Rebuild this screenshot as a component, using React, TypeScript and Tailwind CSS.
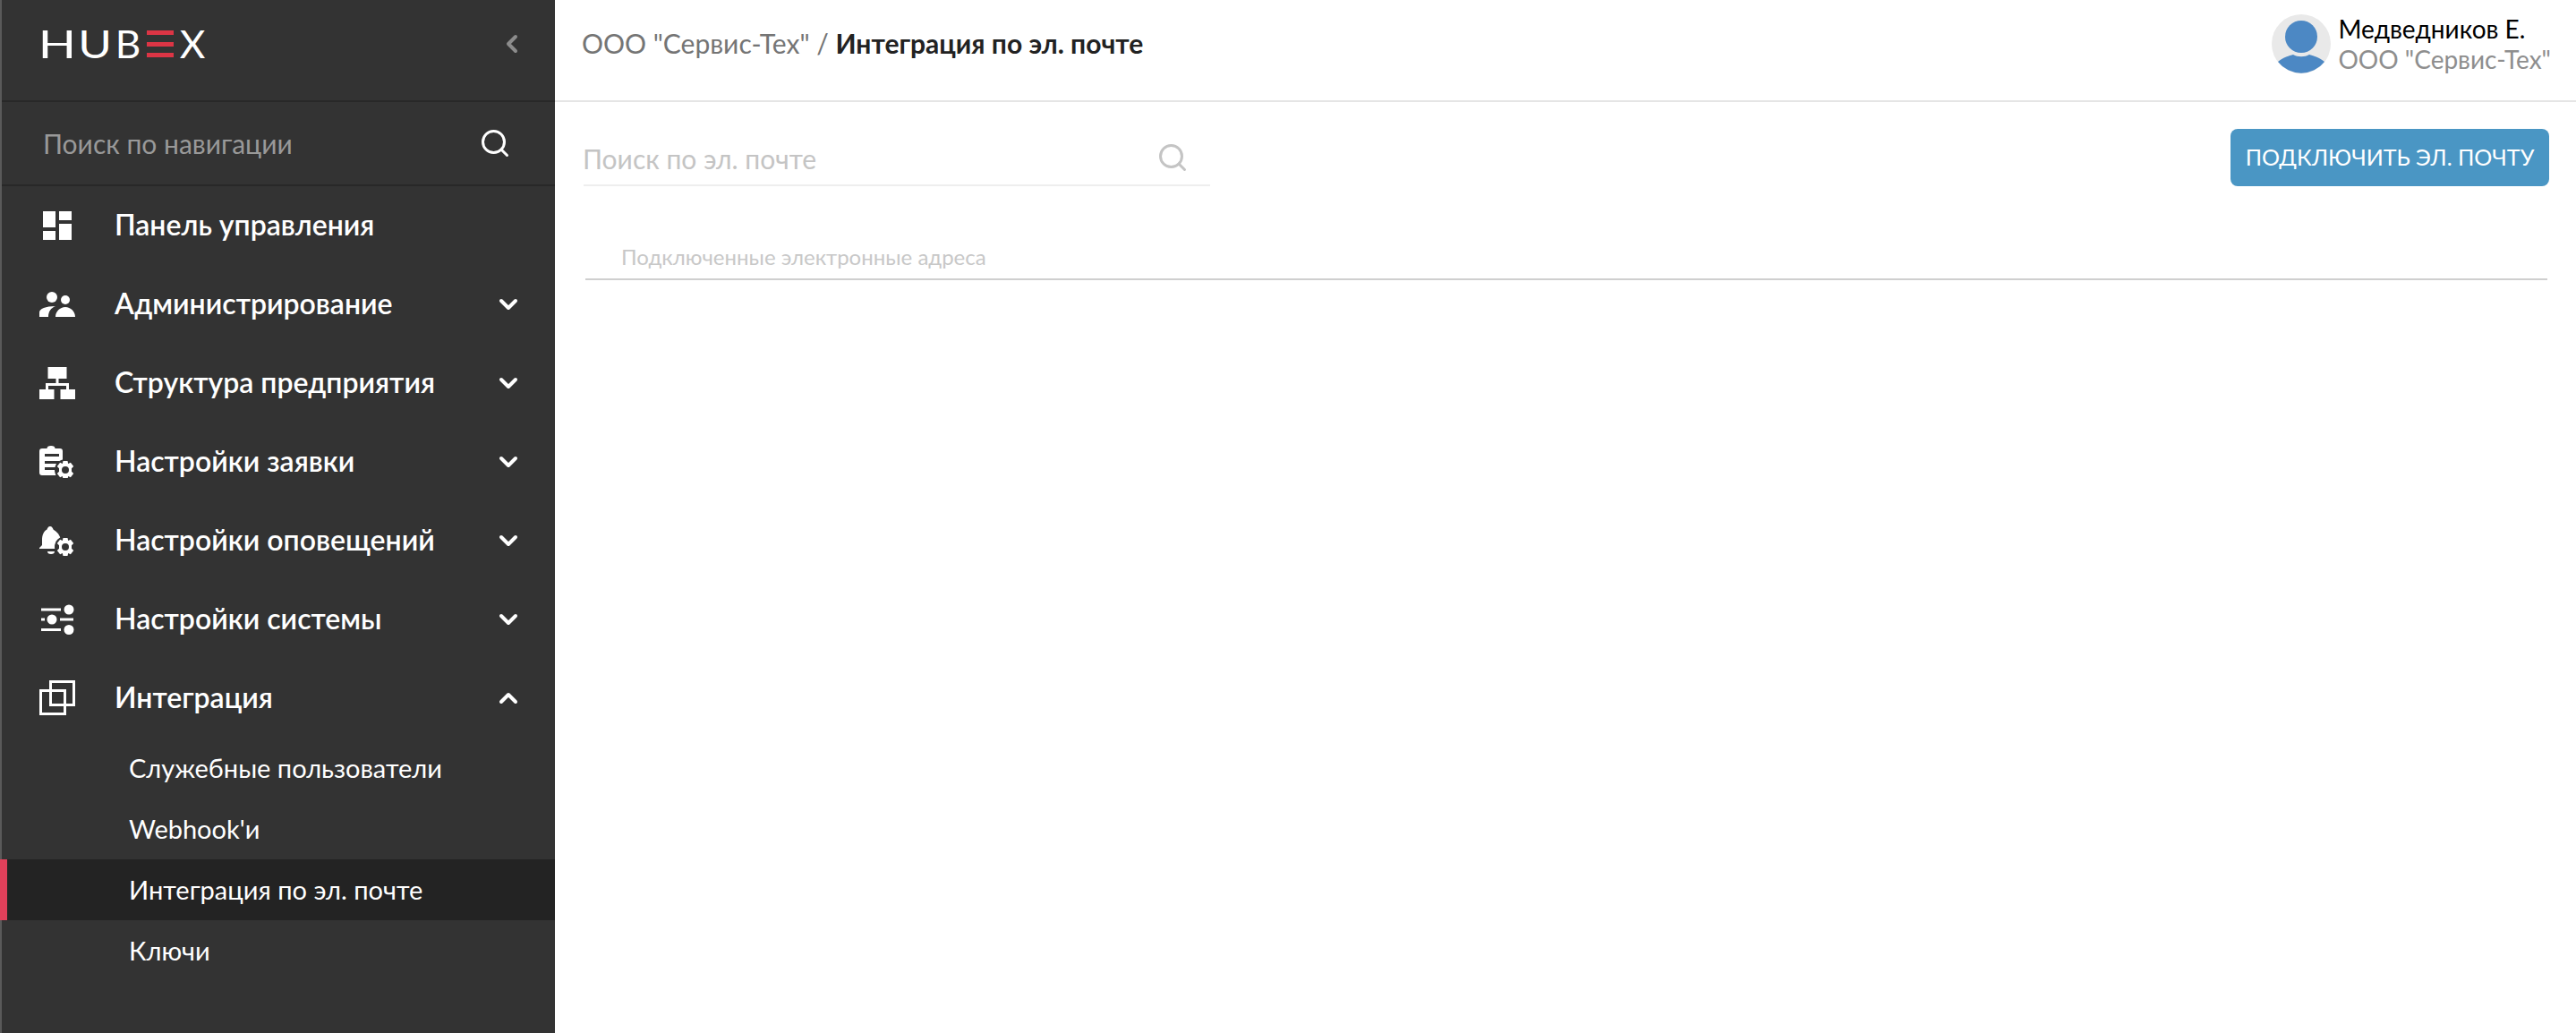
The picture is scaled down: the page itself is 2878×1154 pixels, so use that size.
import { ChevronDown, ChevronLeft, ChevronUp, Search } from "lucide-react";
import type { ReactNode } from "react";

const font = "font-['Lato','Open_Sans','Noto_Sans',sans-serif]";

const DashboardIcon = () => (
  <svg viewBox="0 0 32 32" className="h-8 w-8 fill-white">
    <path d="M0 0h14v18H0zM18 0h14v10H18zM0 22h14v10H0zM18 14h14v18H18z" />
  </svg>
);

const UsersIcon = () => (
  <svg viewBox="0 0 40 28" className="h-7 w-10 fill-white">
    <circle cx="14" cy="6" r="6" />
    <circle cx="29" cy="9" r="5" />
    <path d="M0 28v-5c0-4 7-7 18-7-5 2-8 6-8 12zM18 28c0-6 5-11 11-11s11 5 11 11z" />
  </svg>
);

const StructureIcon = () => (
  <svg viewBox="0 0 40 36" className="h-9 w-10 fill-white">
    <path d="M9.500 0h21v13h-9v5H33v7h7v11H23.500V25H30v-4H10v4h6.500v11H0V25h7v-7h11.500v-5h-9z" />
  </svg>
);

const Gear = ({ cx, cy }: { cx: number; cy: number }) => (
  <g transform={`translate(${cx} ${cy})`}>
    <circle r="12" fill="#333333" />
    <path
      fillRule="evenodd"
      d="M-2.500-10h5l.7 3 2.700-1.300 3.300 4.300-2.200 2.200v3.600l2.200 2.200-3.300 4.300-2.700-1.300-.7 3h-5l-.7-3-2.700 1.300-3.300-4.300 2.200-2.200v-3.600l-2.200-2.200 3.300-4.300 2.700 1.300zM0-4a4 4 0 1 0 0 8 4 4 0 0 0 0-8z"
    />
  </g>
);

const TicketSettingsIcon = () => (
  <svg viewBox="0 0 40 36" className="h-9 w-10 fill-white">
    <path
      fillRule="evenodd"
      d="M3 3h5.500a4.500 3 0 0 1 9 0H23a3 3 0 0 1 3 3v24a3 3 0 0 1-3 3H3a3 3 0 0 1-3-3V6a3 3 0 0 1 3-3zM6 9v3h16V9zM6 17v3h16v-3zM6 24v3h14v-3z"
    />
    <Gear cx={29} cy={27} />
  </svg>
);

const BellSettingsIcon = () => (
  <svg viewBox="0 0 40 36" className="h-9 w-10 fill-white">
    <path d="M12 2c2 0 3 2 3.500 3.500C20 8 23 12 24 17v7l2 3H0v-1l3-3v-6C3 12 5 7 8.500 5.500 9 4 10 2 12 2zM9 30h8a4 3 0 0 1-8 0z" />
    <Gear cx={29} cy={25} />
  </svg>
);

const SlidersIcon = () => (
  <svg viewBox="0 0 40 36" className="h-9 w-10 fill-white">
    <path d="M2 5.500h22v3H2zM2 16.500h4v3H2zM23 16.500h15v3H23zM2 28h22v3H2z" />
    <circle cx="33" cy="7" r="5.500" />
    <circle cx="14" cy="18" r="5.500" />
    <circle cx="33" cy="29.500" r="5.500" />
  </svg>
);

const IntegrationIcon = () => (
  <svg viewBox="0 0 40 40" className="h-10 w-10 fill-none stroke-white stroke-[3]">
    <path d="M12.500 1.500h26v26h-26zM1.500 11.500h27v26h-27z" />
  </svg>
);

// letters are real text, only stretched to the logo's wide proportions
const LogoLetter = ({ children, className }: { children: string; className: string }) => (
  <span className={`flex h-[30px] items-center justify-center text-[42px] leading-none text-white ${className}`}>
    {children}
  </span>
);

const Logo = () => (
  <div className="-ml-[1px] flex items-center">
    <LogoLetter className="w-[34px] scale-x-[1.32]">H</LogoLetter>
    <LogoLetter className="ml-[10px] w-[30px] scale-x-[1.22]">U</LogoLetter>
    <LogoLetter className="ml-[11px] w-[22px] scale-x-[1.05]">B</LogoLetter>
    <span className="ml-[10px] flex h-[30px] w-[30px] flex-col justify-between">
      <i className="block h-[5px] bg-[#dc3545]" />
      <i className="block h-[5px] bg-[#dc3545]" />
      <i className="block h-[5px] bg-[#dc3545]" />
    </span>
    <LogoLetter className="ml-[7px] w-[28px] scale-x-[1.05]">X</LogoLetter>
  </div>
);

const NavRow = ({ icon, label, open }: { icon: ReactNode; label: string; open?: boolean }) => (
  <div className="flex h-[88px] items-center pr-[36px] text-white">
    <div className="flex w-[126px] shrink-0 justify-center pr-[2px]">{icon}</div>
    <span className="flex-1 pb-[2px] text-[32px] font-semibold">{label}</span>
    {open === undefined ? null : open ? (
      <ChevronUp className="h-8 w-8" strokeWidth={3} />
    ) : (
      <ChevronDown className="h-8 w-8" strokeWidth={3} />
    )}
  </div>
);

const SubRow = ({ label, active }: { label: string; active?: boolean }) => (
  <div
    className={`flex h-[68px] items-center text-[29px] text-white ${
      active ? "-ml-[2px] border-l-[8px] border-[#e0405a] bg-[#232323] pl-[136px]" : "pl-[142px]"
    }`}
  >
    {label}
  </div>
);

export default function App() {
  return (
    <div className={`${font} flex h-[1154px] w-[2878px] overflow-hidden bg-white`}>
      <aside className="flex w-[620px] shrink-0 flex-col border-l-[2px] border-[#5a5a5a] bg-[#333333]">
        <div className="flex h-[114px] shrink-0 items-center justify-between border-b-[2px] border-[#282828] pb-[14px] pl-[46px] pr-[32px]">
          <Logo />
          <ChevronLeft className="h-8 w-8 text-[#8c8c8c]" strokeWidth={3} />
        </div>
        <div className="flex h-[94px] shrink-0 items-center justify-between border-b-[2px] border-[#282828] pl-[46px] pr-[49px]">
          <span className="text-[30px] text-[#999999]">Поиск по навигации</span>
          <Search className="h-9 w-9 text-white" strokeWidth={2} />
        </div>
        <div>
          <NavRow icon={<DashboardIcon />} label="Панель управления" />
          <NavRow icon={<UsersIcon />} label="Администрирование" open={false} />
          <NavRow icon={<StructureIcon />} label="Структура предприятия" open={false} />
          <NavRow icon={<TicketSettingsIcon />} label="Настройки заявки" open={false} />
          <NavRow icon={<BellSettingsIcon />} label="Настройки оповещений" open={false} />
          <NavRow icon={<SlidersIcon />} label="Настройки системы" open={false} />
          <NavRow icon={<IntegrationIcon />} label="Интеграция" open />
          <SubRow label="Служебные пользователи" />
          <SubRow label="Webhook'и" />
          <SubRow label="Интеграция по эл. почте" active />
          <SubRow label="Ключи" />
        </div>
      </aside>
      <main className="flex min-w-0 flex-1 flex-col">
        <header className="flex h-[114px] shrink-0 items-center justify-between border-b-[2px] border-[#e5e5e5] pl-[30px] pr-[28px]">
          <div className="pb-[16px] text-[30px] text-[#757575]">
            ООО "Сервис-Тех" / <b className="font-bold text-[#222222]">Интеграция по эл. почте</b>
          </div>
          <div className="flex items-center gap-2 pb-[14px]">
            <svg viewBox="0 0 66 66" className="h-[66px] w-[66px]">
              <circle cx="33" cy="33" r="33" fill="#e9e9e9" />
              <circle cx="33" cy="25" r="18" fill="#4c88c4" />
              <path d="M7 53c6-5 13-7 17-8 5 3 13 3 18 0 4 1 11 3 17 8a33 33 0 0 1-52 0z" fill="#4c88c4" />
            </svg>
            <div className="flex flex-col">
              <span className="text-[28px] leading-[34px] text-black">Медведников Е.</span>
              <span className="text-[28px] leading-[34px] text-[#8e8e8e]">ООО "Сервис-Тех"</span>
            </div>
          </div>
        </header>
        <div className="flex items-start justify-between pl-[32px] pr-[30px] pt-[30px]">
          <div className="mt-[2px] flex h-[62px] w-[700px] items-center justify-between border-b-[2px] border-[#eeeeee] pr-[24px]">
            <span className="-ml-[1px] pt-[2px] text-[30px] text-[#c4c4c4]">Поиск по эл. почте</span>
            <Search className="h-9 w-9 text-[#c4c4c4]" strokeWidth={2} />
          </div>
          <button className="h-16 w-[356px] rounded-lg bg-[#4a96c4] text-[25px] text-white">ПОДКЛЮЧИТЬ ЭЛ. ПОЧТУ</button>
        </div>
        <div className="ml-[34px] mr-[32px] mt-[61px] border-b-[2px] border-[#cfcfcf] pb-[6px] pl-[40px] text-[24px] text-[#c8c8c8]">
          Подключенные электронные адреса
        </div>
      </main>
    </div>
  );
}
